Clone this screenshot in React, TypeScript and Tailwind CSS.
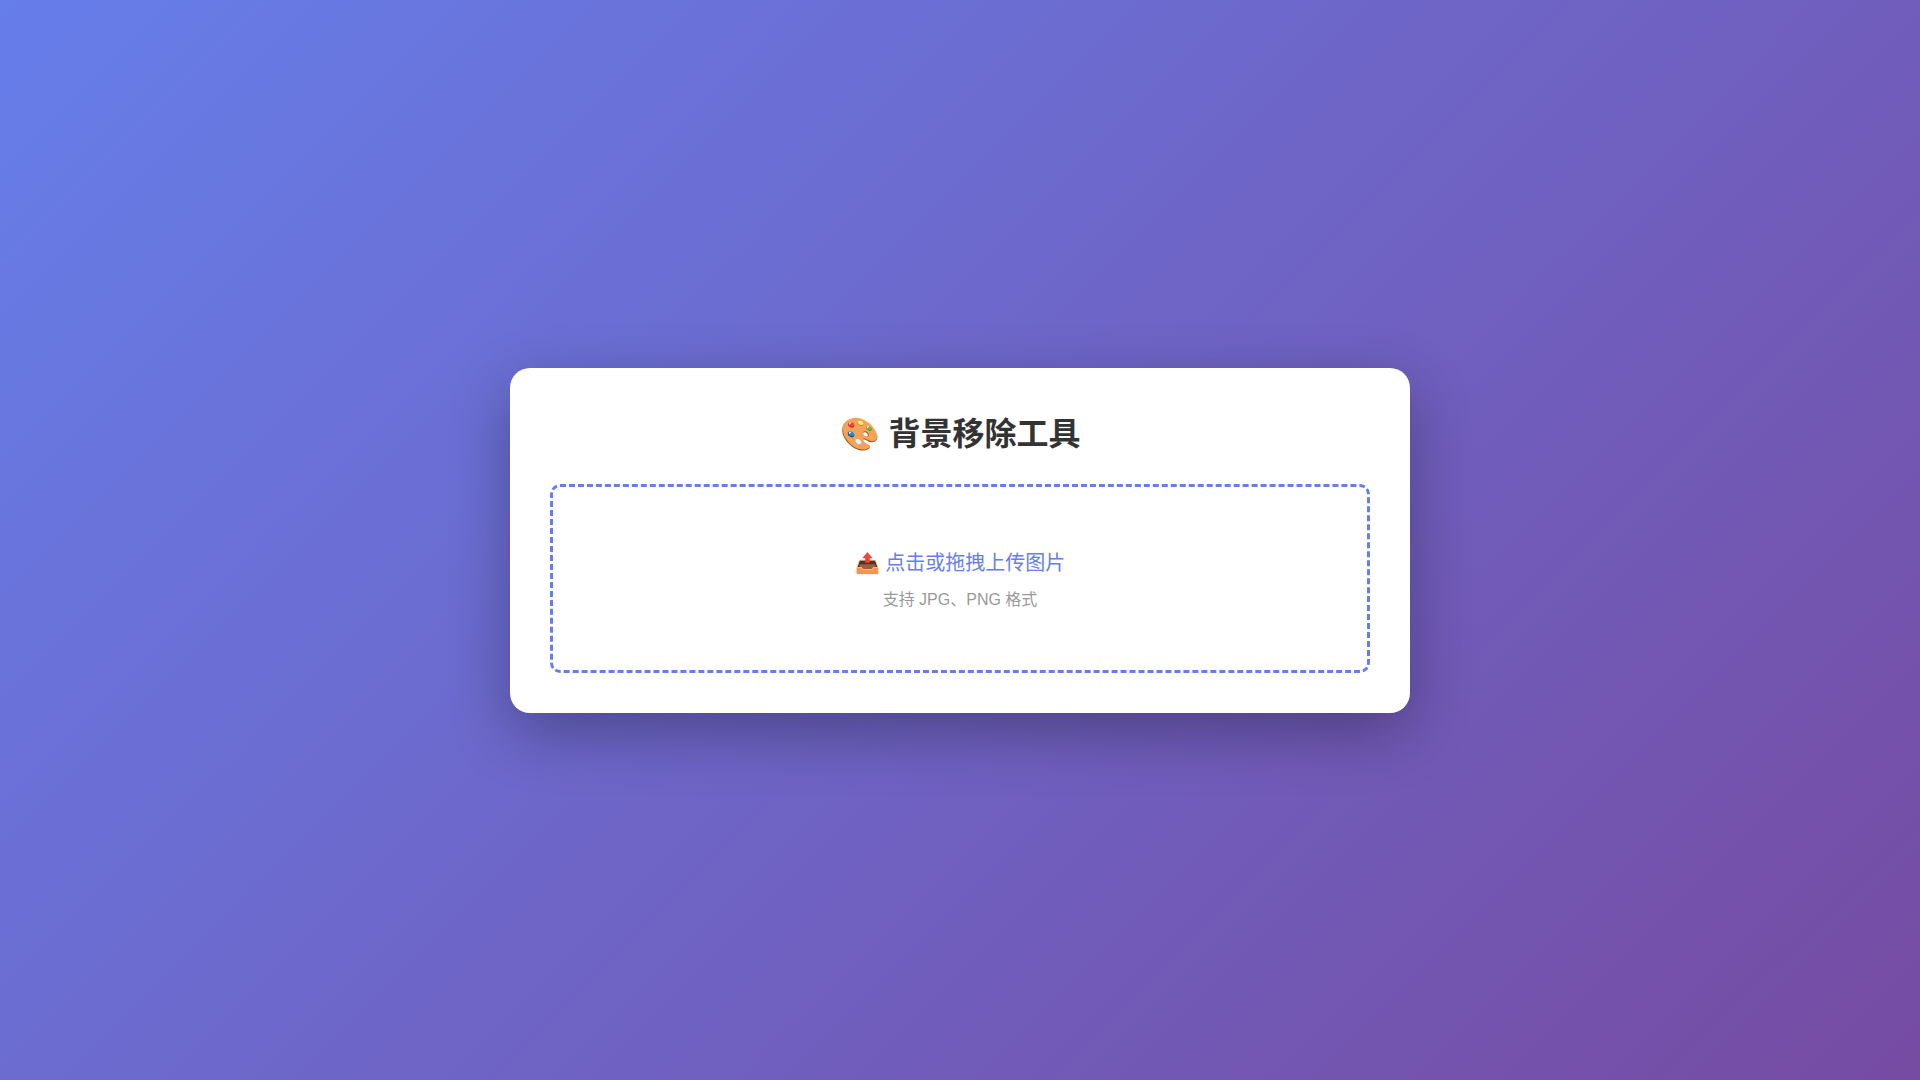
import { useRef, useState } from "react";

export default function App() {
  const inputRef = useRef<HTMLInputElement>(null);
  const [fileName, setFileName] = useState("");

  return (
    <main className="flex min-h-screen items-center justify-center bg-[linear-gradient(135deg,#667eea_0%,#764ba2_100%)] p-5 font-['Liberation_Sans','Noto_Sans_CJK_SC',sans-serif]">
      <section className="w-full max-w-[900px] rounded-[20px] bg-white p-10 shadow-[0_20px_60px_rgba(0,0,0,0.3)]">
        <h1 className="mb-[30px] text-center text-[32px] leading-[normal] font-bold text-[#333]">
          🎨 背景移除工具
        </h1>
        <button
          type="button"
          onClick={() => inputRef.current?.click()}
          onDragOver={(e) => e.preventDefault()}
          onDrop={(e) => {
            e.preventDefault();
            setFileName(e.dataTransfer.files[0]?.name ?? "");
          }}
          className="block w-full cursor-pointer rounded-[10px] border-[3px] border-dashed border-[#667eea] p-[60px] text-center hover:bg-[#f8f9ff]"
        >
          <span className="mb-2.5 block text-xl leading-[normal] text-[#667eea]">📤 点击或拖拽上传图片</span>
          <span className="block text-base leading-[normal] text-[#999]">{fileName || "支持 JPG、PNG 格式"}</span>
        </button>
        <input
          ref={inputRef}
          type="file"
          accept="image/*"
          aria-label="上传图片"
          className="hidden"
          onChange={(e) => setFileName(e.target.files?.[0]?.name ?? "")}
        />
      </section>
    </main>
  );
}
